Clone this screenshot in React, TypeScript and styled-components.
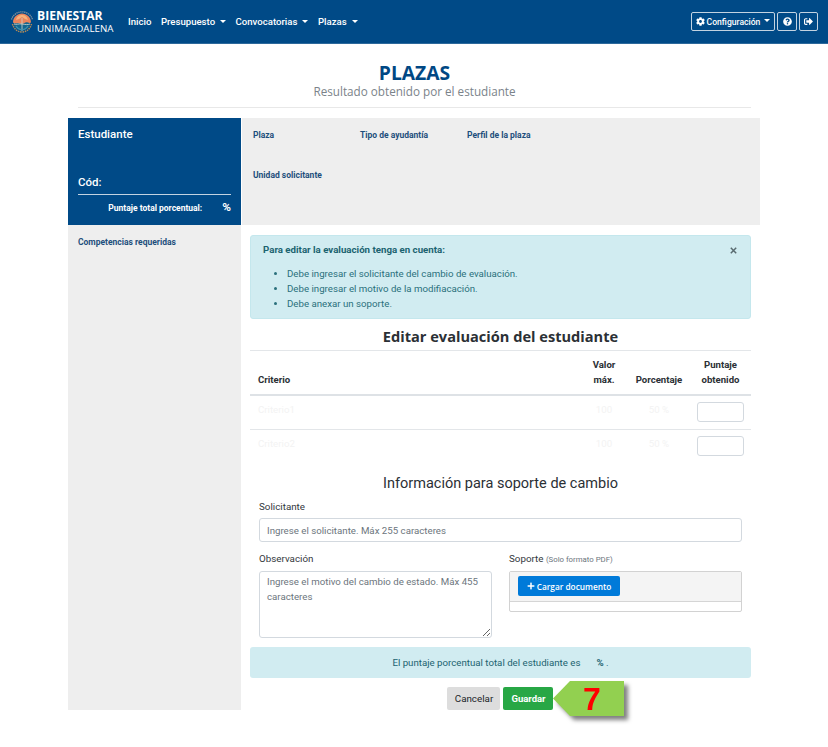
import React from "react";
import styled, { createGlobalStyle } from "styled-components";
import { FaCog, FaQuestionCircle, FaSignOutAlt, FaPlus } from "react-icons/fa";

const Global = createGlobalStyle`
  * { box-sizing: border-box; }
  body { margin: 0; background: #fff; font-family: Roboto, sans-serif; font-size: 9.7px; color: #2b3035; }
  button, input, textarea { font-family: inherit; font-size: inherit; margin: 0; }
  h1, h2, h3, p, ul { margin: 0; padding: 0; font-weight: 400; }
`;

const Page = styled.div`
  width: 828px;
  height: 747px;
  overflow: hidden;
`;

const NavBar = styled.header`
  display: flex;
  align-items: center;
  height: 44px;
  padding: 0 10px;
  background: #004a87;
  border-bottom: 1px solid #2d699b;
  color: #fff;
`;

const Brand = styled.div`
  display: flex;
  align-items: center;
  gap: 3px;
  width: 118px;
`;

const BrandText = styled.div`
  font-family: "Open Sans", sans-serif;
  white-space: nowrap;
`;

const BrandName = styled.div`
  font-weight: 700;
  font-size: 12.1px;
  line-height: 13px;
`;

const BrandUnit = styled.div`
  font-size: 9.75px;
  line-height: 13px;
`;

const NavLinks = styled.nav`
  display: flex;
  gap: 9.5px;
  flex: 1;
  padding-top: 1px;
`;

const NavLink = styled.a`
  display: flex;
  align-items: center;
  font-size: 9.6px;
  font-weight: 500;
  line-height: 14px;
  white-space: nowrap;
`;

const Caret = styled.span<{ $gap?: number }>`
  margin-left: ${(p) => p.$gap ?? 5}px;
  margin-bottom: 2px;
  border: 3px solid transparent;
  border-top-color: currentColor;
  border-bottom: 0;
`;

const NavActions = styled.div`
  display: flex;
  gap: 2px;
`;

const NavButton = styled.button<{ $w: number }>`
  display: flex;
  align-items: center;
  justify-content: center;
  width: ${(p) => p.$w}px;
  height: 19px;
  padding: 0;
  color: #fff;
  background: transparent;
  border: 1px solid #c3d3e1;
  border-radius: 2px;
  font-size: 8.6px;
  font-weight: 500;
  gap: 2px;
  white-space: nowrap;
`;

const TitleBlock = styled.div`
  width: 673px;
  height: 64px;
  margin: 0 0 10px 78px;
  padding-top: 15px;
  border-bottom: 1px solid #e8e8e8;
  text-align: center;
  font-family: "Open Sans", sans-serif;
`;

const Title = styled.h1`
  font-size: 19.3px;
  line-height: 27px;
  margin-bottom: -1px;
  font-weight: 700;
  color: #004884;
`;

const Subtitle = styled.p`
  font-size: 11.7px;
  line-height: 13px;
  color: #7b838a;
`;

const Main = styled.main`
  display: grid;
  grid-template-columns: 173px 519px;
  grid-template-rows: 107px 485px;
  margin-left: 68px;
`;

const StudentCard = styled.section`
  padding: 8px 10px 0;
  background: #004a87;
  color: #fff;
`;

const StudentField = styled.div<{ $h: number }>`
  height: ${(p) => p.$h}px;
  font-size: 11.5px;
  line-height: 17px;
  font-weight: 500;
`;

const ScoreLine = styled.div`
  display: flex;
  justify-content: flex-end;
  gap: 20px;
  padding-top: 4px;
  border-top: 1px solid #c3d3e1;
  font-size: 8.5px;
  line-height: 19px;
  font-weight: 700;
`;

const Percent = styled.span`
  font-size: 11.8px;
  line-height: 17px;
`;

const PlaceInfo = styled.section`
  display: grid;
  grid-template-columns: 107px 107px 1fr;
  grid-template-rows: 40px 40px;
  padding: 10px 0 0 11px;
  margin-left: 1px;
  background: #eee;
`;

const FieldName = styled.div`
  font-size: 8.5px;
  line-height: 14px;
  font-weight: 700;
  color: #1d4e7c;
`;

const Sidebar = styled.aside`
  padding: 10px;
  background: #eee;
`;

const Content = styled.section`
  width: 501px;
  margin-left: 9px;
  padding-top: 10px;
`;

const Notice = styled.div`
  display: flex;
  justify-content: space-between;
  height: 84px;
  padding: 7px 13px 7px 12px;
  background: #d1ecf1;
  border: 1px solid #c4e7ed;
  border-radius: 3px;
  color: #1b6370;
  line-height: 14.7px;
`;

const NoticeList = styled.ul`
  padding: 9.5px 0 0 24px;
  color: #2a707c;
`;

const CloseIcon = styled.svg`
  width: 7px;
  height: 7px;
  margin-top: 4px;
`;

const Heading = styled.h2`
  height: 31px;
  padding-top: 7px;
  font-family: "Open Sans", sans-serif;
  font-size: 14.6px;
  line-height: 20px;
  font-weight: 700;
  text-align: center;
`;

const Row = styled.div<{ $h: number; $line?: string }>`
  display: grid;
  grid-template-columns: 1fr 44px 66px 57px;
  height: ${(p) => p.$h}px;
  padding: 0 2px 0 8px;
  border-top: ${(p) => p.$line ?? "1px solid #e3e6e9"};
  text-align: center;
  color: #f3f3f3;
  line-height: 15px;
`;

const HeadCell = styled.div<{ $left?: boolean }>`
  align-self: end;
  padding: 0 3px 7px ${(p) => (p.$left ? 0 : 3)}px;
  text-align: ${(p) => (p.$left ? "left" : "center")};
  font-size: 9.6px;
  font-weight: 700;
  white-space: nowrap;
  color: #2b3035;
`;

const Cell = styled.div<{ $left?: boolean }>`
  padding-top: 6px;
  text-align: ${(p) => (p.$left ? "left" : "center")};
`;

const ScoreInput = styled.input`
  width: 47px;
  height: 20px;
  margin: 6px 0 0 5px;
  border: 1px solid #d3d9df;
  border-radius: 3px;
`;

const FormTitle = styled.h3`
  padding-top: 9px;
  font-size: 14.5px;
  line-height: 24px;
  text-align: center;
`;

const Form = styled.div`
  display: grid;
  grid-template-columns: 232px 232px;
  column-gap: 18px;
  padding: 0 0 0 9px;
`;

const Wide = styled.div`
  grid-column: 1 / -1;
  height: 52px;
`;

const Field = styled.div`
  height: 99px;
`;

const Label = styled.label<{ $h?: number }>`
  display: block;
  height: ${(p) => p.$h ?? 23}px;
  padding-top: 3px;
  line-height: 15px;
  color: #33383d;
  font-size: 9.8px;
  white-space: nowrap;
`;

const Small = styled.small`
  font-size: 7.8px;
  color: #6c757d;
`;

const TextInput = styled.input`
  display: block;
  width: 483px;
  height: 24px;
  padding: 0 7px;
  border: 1px solid #d3d9df;
  border-radius: 3px;
  &::placeholder { color: #6c757d; opacity: 1; }
`;

const TextArea = styled.textarea`
  display: block;
  width: 233px;
  height: 67px;
  padding: 3px 7px;
  border: 1px solid #d3d9df;
  border-radius: 3px;
  line-height: 14.7px;
  &::placeholder { color: #6c757d; opacity: 1; }
`;

const Uploader = styled.div`
  width: 233px;
  height: 41px;
  border: 1px solid #d2d2d2;
  border-radius: 2px;
`;

const UploadBar = styled.div`
  height: 30px;
  padding: 4px 8px;
  background: #f4f4f4;
  border-bottom: 1px solid #d5d5d5;
`;

const UploadButton = styled.button`
  display: flex;
  align-items: center;
  justify-content: center;
  gap: 2px;
  width: 102px;
  height: 20px;
  padding: 0;
  border: 0;
  border-radius: 2px;
  background: #007ad9;
  color: #fff;
  font: 600 8.3px "Open Sans", sans-serif;
  white-space: nowrap;
`;

const Total = styled.div`
  display: flex;
  justify-content: center;
  gap: 16px;
  height: 31px;
  line-height: 31px;
  background: #d1ecf1;
  border-radius: 3px;
  color: #1b6370;
`;

const Actions = styled.div`
  display: flex;
  gap: 3px;
  margin: 9px 0 0 197px;
`;

const ActionButton = styled.button<{ $primary?: boolean }>`
  width: ${(p) => (p.$primary ? 50 : 53)}px;
  height: 23px;
  padding: 0 0 0 1px;
  border: 0;
  border-radius: 2px;
  background: ${(p) => (p.$primary ? "#28a745" : "#dddddd")};
  color: ${(p) => (p.$primary ? "#fff" : "#212529")};
  font-weight: ${(p) => (p.$primary ? 700 : 400)};
  font-size: ${(p) => (p.$primary ? 9.5 : 9.8)}px;
`;

/* Callout that points at the save button */
const StepAnchor = styled.div`
  position: relative;
  width: 0;
`;

const StepCallout = styled.div`
  position: absolute;
  left: -3px;
  top: -6px;
  width: 71px;
  height: 35px;
  filter: drop-shadow(4px 4px 2px rgba(0, 0, 0, 0.5));
`;

const StepShape = styled.div`
  height: 100%;
  padding-left: 7px;
  clip-path: polygon(0 50%, 17px 0, 100% 0, 100% 100%, 17px 100%);
  background: #92d050;
  color: #f00;
  font: 700 32px/37px "Liberation Sans", sans-serif;
  text-align: center;
`;

const Logo = () => (
  <svg width="24" height="24" viewBox="0 0 24 24" fill="none">
    <path d="M1.500 9.500A11 11 0 0 1 22.500 9.500" stroke="#7f8f9a" strokeWidth="1.300" strokeDasharray="1.400 .6" />
    <path d="M2.500 14C4 19 7.500 22 12 22S20 19 21.500 14" stroke="#b08a58" strokeWidth="1.500" strokeDasharray="1.500 .8" />
    <circle cx="12" cy="12.500" r="8.300" fill="#12658e" />
    <path d="M3 12.500C3 7 7.500 3.500 12 3.500s9 3.500 9 9c-2 1.400-3.500-.8-5.500 0s-2 1.200-3.500 1.200-2.500-.8-4-.8-3 1.200-5-.4Z" fill="#e9845c" />
    <path d="M6 10c1-4 3.500-5 6-5s5 1 6 5l-3-1-3-2-3 2Z" fill="#f7b27b" />
    <path d="M4 14c2 1 5-.5 8 0s6 1 8 0M12 8v13" stroke="#d4d6c9" strokeWidth=".8" />
    <path d="M6 16c1 2 3 3.500 6 4M18 16c-1 2-3 3.500-6 4" stroke="#3f91ad" strokeWidth="1.200" />
  </svg>
);

const rows = ["Criterio1", "Criterio2"];

export default function App() {
  return (
    <Page>
      <Global />
      <NavBar>
        <Brand>
          <Logo />
          <BrandText>
            <BrandName>BIENESTAR</BrandName>
            <BrandUnit>UNIMAGDALENA</BrandUnit>
          </BrandText>
        </Brand>
        <NavLinks>
          <NavLink>Inicio</NavLink>
          <NavLink>Presupuesto<Caret /></NavLink>
          <NavLink>Convocatorias<Caret /></NavLink>
          <NavLink>Plazas<Caret /></NavLink>
        </NavLinks>
        <NavActions>
          <NavButton $w={84}><FaCog size={9} />Configuración<Caret $gap={2} /></NavButton>
          <NavButton $w={20}><FaQuestionCircle size={9} /></NavButton>
          <NavButton $w={19}><FaSignOutAlt size={9} /></NavButton>
        </NavActions>
      </NavBar>
      <TitleBlock>
        <Title>PLAZAS</Title>
        <Subtitle>Resultado obtenido por el estudiante</Subtitle>
      </TitleBlock>
      <Main>
        <StudentCard>
          <StudentField $h={48}>Estudiante</StudentField>
          <StudentField $h={20}>Cód:</StudentField>
          <ScoreLine><span>Puntaje total porcentual:</span><Percent>%</Percent></ScoreLine>
        </StudentCard>
        <PlaceInfo>
          <FieldName>Plaza</FieldName>
          <FieldName>Tipo de ayudantía</FieldName>
          <FieldName>Perfil de la plaza</FieldName>
          <FieldName>Unidad solicitante</FieldName>
        </PlaceInfo>
        <Sidebar><FieldName>Competencias requeridas</FieldName></Sidebar>
        <Content>
          <Notice>
            <div>
              <b>Para editar la evaluación tenga en cuenta:</b>
              <NoticeList>
                <li>Debe ingresar el solicitante del cambio de evaluación.</li>
                <li>Debe ingresar el motivo de la modifiacación.</li>
                <li>Debe anexar un soporte.</li>
              </NoticeList>
            </div>
            <CloseIcon viewBox="0 0 7 7"><path d="M.8.8 6.200 6.200M6.200.8.8 6.200" stroke="#596b70" strokeWidth="1.500" /></CloseIcon>
          </Notice>
          <Heading>Editar evaluación del estudiante</Heading>
          <Row $h={44}>
            <HeadCell $left>Criterio</HeadCell>
            <HeadCell>Valor<br />máx.</HeadCell>
            <HeadCell>Porcentaje</HeadCell>
            <HeadCell>Puntaje<br />obtenido</HeadCell>
          </Row>
          {rows.map((name, i) => (
            <Row key={name} $h={i ? 34 : 35} $line={i ? undefined : "2px solid #dee2e6"}>
              <Cell $left>{name}</Cell>
              <Cell>100</Cell>
              <Cell>50 %</Cell>
              <ScoreInput />
            </Row>
          ))}
          <FormTitle>Información para soporte de cambio</FormTitle>
          <Form>
            <Wide>
              <Label $h={22}>Solicitante</Label>
              <TextInput placeholder="Ingrese el solicitante. Máx 255 caracteres" />
            </Wide>
            <Field>
              <Label>Observación</Label>
              <TextArea placeholder="Ingrese el motivo del cambio de estado. Máx 455 caracteres" />
            </Field>
            <Field>
              <Label>Soporte <Small>(Solo formato PDF)</Small></Label>
              <Uploader>
                <UploadBar><UploadButton><FaPlus size={8} />Cargar documento</UploadButton></UploadBar>
              </Uploader>
            </Field>
          </Form>
          <Total><span>El puntaje porcentual total del estudiante es</span><span><b>%</b> .</span></Total>
          <Actions>
            <ActionButton>Cancelar</ActionButton>
            <ActionButton $primary>Guardar</ActionButton>
            <StepAnchor><StepCallout><StepShape>7</StepShape></StepCallout></StepAnchor>
          </Actions>
        </Content>
      </Main>
    </Page>
  );
}
